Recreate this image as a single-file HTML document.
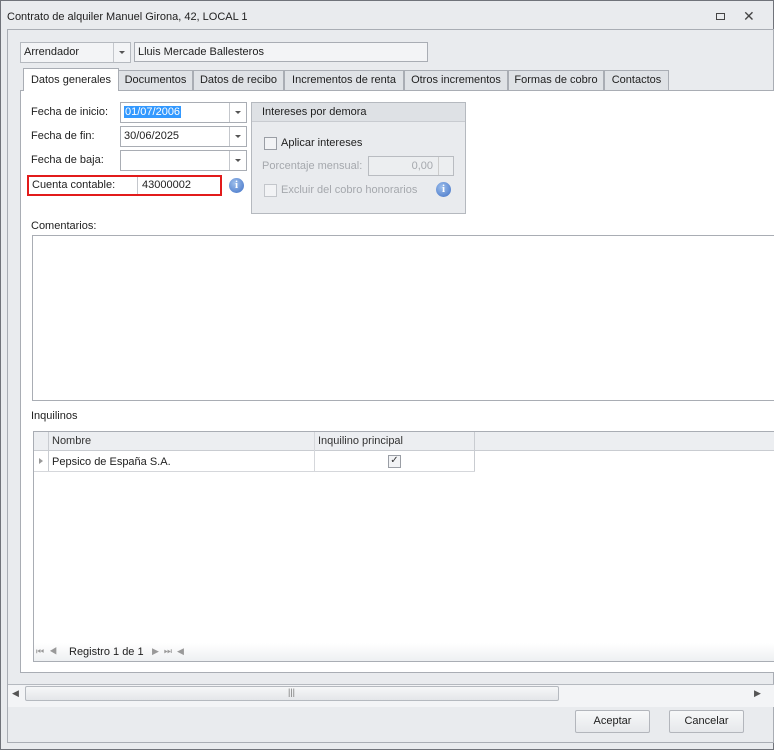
<!DOCTYPE html>
<html><head><meta charset="utf-8"><style>
*{box-sizing:border-box;margin:0;padding:0}
body{width:774px;height:750px;background:#e9ebee;font:11px "Liberation Sans",sans-serif;color:#1e1e1e;position:relative;overflow:hidden}
.a{position:absolute}
.b{border:1px solid #a9adb4;background:#fff}
.t{position:absolute;white-space:nowrap}
.dd{position:absolute;right:0;top:0;bottom:0;width:17px;border-left:1px solid #c4c7cc;background:#fff}
.dd:after{content:"";position:absolute;left:5px;top:8px;border:3px solid transparent;border-top:3px solid #555;border-bottom:0}
.tab{position:absolute;top:70px;height:20px;border:1px solid #a9adb4;border-bottom:none;background:#dfe2e6;text-align:center;line-height:18px;color:#222}
.info{position:absolute;width:15px;height:15px;border-radius:50%;background:radial-gradient(circle at 40% 35%,#9fc0ec,#3f70c6);color:#fff;font:bold 11px "Liberation Serif",serif;text-align:center;line-height:15px}
.cb{position:absolute;width:13px;height:13px;border:1px solid #9a9ea5;background:#f2f3f5}
</style></head><body>
<div class="a" style="left:0;top:0;width:774px;height:750px;border:1px solid #70737a"></div>
<div class="t" style="left:7px;top:11px">Contrato de alquiler Manuel Girona, 42, LOCAL 1</div>
<div class="a" style="left:716px;top:13px;width:9px;height:7px;border:1px solid #444"></div>
<div class="t" style="left:743px;top:8px;font-size:14px;color:#444">✕</div>
<div class="a" style="left:7px;top:29px;width:767px;height:714px;border:1px solid #a9adb4"></div>
<div class="a b" style="left:20px;top:42px;width:111px;height:21px;background:#f3f4f6;border-color:#b5b9bf"><span class="t" style="left:3px;top:3px">Arrendador</span><div class="dd" style="background:#f3f4f6"></div></div>
<div class="a b" style="left:134px;top:42px;width:294px;height:20px;background:#f3f4f6"><span class="t" style="left:3px;top:3px">Lluis Mercade Ballesteros</span></div>
<div class="tab" style="left:23px;top:68px;width:96px;height:23px;background:#fff;line-height:22px;z-index:2">Datos generales</div>
<div class="tab" style="left:118px;width:75px">Documentos</div>
<div class="tab" style="left:193px;width:91px">Datos de recibo</div>
<div class="tab" style="left:284px;width:120px">Incrementos de renta</div>
<div class="tab" style="left:404px;width:104px">Otros incrementos</div>
<div class="tab" style="left:508px;width:96px">Formas de cobro</div>
<div class="tab" style="left:604px;width:65px">Contactos</div>
<div class="a" style="left:20px;top:90px;width:760px;height:583px;border:1px solid #a9adb4;background:#fff"></div>
<div class="t" style="left:31px;top:106px">Fecha de inicio:</div>
<div class="t" style="left:31px;top:130px">Fecha de fin:</div>
<div class="t" style="left:31px;top:154px">Fecha de baja:</div>
<div class="a b" style="left:120px;top:102px;width:127px;height:21px"><span class="t" style="left:3px;top:3px;background:#3399ff;color:#fff;padding:0 1px">01/07/2006</span><div class="dd"></div></div>
<div class="a b" style="left:120px;top:126px;width:127px;height:21px"><span class="t" style="left:3px;top:3px">30/06/2025</span><div class="dd"></div></div>
<div class="a b" style="left:120px;top:150px;width:127px;height:21px"><div class="dd"></div></div>
<div class="a" style="left:27px;top:175px;width:195px;height:21px;border:2px solid #e21b1b;background:#fff"></div>
<div class="a" style="left:137px;top:177px;width:1px;height:17px;background:#c4c7cc"></div>
<div class="t" style="left:32px;top:179px">Cuenta contable:</div>
<div class="t" style="left:142px;top:179px">43000002</div>
<div class="info" style="left:229px;top:178px">i</div>
<div class="a" style="left:251px;top:102px;width:215px;height:112px;border:1px solid #b5b9bf;background:#e9ebee"></div>
<div class="a" style="left:252px;top:103px;width:213px;height:19px;background:#dee1e5;border-bottom:1px solid #c8cbd0"></div>
<div class="t" style="left:262px;top:106px">Intereses por demora</div>
<div class="cb" style="left:264px;top:137px"></div>
<div class="t" style="left:281px;top:137px">Aplicar intereses</div>
<div class="t" style="left:262px;top:160px;color:#a5a8ad">Porcentaje mensual:</div>
<div class="a" style="left:368px;top:156px;width:86px;height:20px;border:1px solid #b9bcc1;background:#eceef0"><span class="t" style="right:20px;top:3px;color:#a5a8ad">0,00</span><div class="a" style="right:0;top:0;bottom:0;width:15px;border-left:1px solid #ccc"></div></div>
<div class="cb" style="left:264px;top:184px;border-color:#c3c6cb"></div>
<div class="t" style="left:281px;top:184px;color:#a5a8ad">Excluir del cobro honorarios</div>
<div class="info" style="left:436px;top:182px">i</div>
<div class="t" style="left:31px;top:220px">Comentarios:</div>
<div class="a b" style="left:32px;top:235px;width:750px;height:166px"></div>
<div class="t" style="left:31px;top:410px">Inquilinos</div>
<div class="a b" style="left:33px;top:431px;width:750px;height:231px"></div>
<div class="a" style="left:34px;top:432px;width:740px;height:19px;background:#eceef1;border-bottom:1px solid #c9ccd1"></div>
<div class="a" style="left:48px;top:432px;width:1px;height:40px;background:#c9ccd1"></div>
<div class="a" style="left:314px;top:432px;width:1px;height:40px;background:#d5d7db"></div>
<div class="a" style="left:474px;top:432px;width:1px;height:40px;background:#c9ccd1"></div>
<div class="a" style="left:34px;top:471px;width:441px;height:1px;background:#d5d7db"></div>
<div class="t" style="left:52px;top:435px;color:#333">Nombre</div>
<div class="t" style="left:318px;top:435px;color:#333">Inquilino principal</div>
<div class="a" style="left:39px;top:458px;border:3px solid transparent;border-left:4px solid #999;border-right:0"></div>
<div class="t" style="left:52px;top:456px">Pepsico de España S.A.</div>
<div class="cb" style="left:388px;top:455px;font-size:10px;line-height:10px;text-align:center;color:#333">✓</div>
<div class="a" style="left:34px;top:643px;width:740px;height:18px;background:linear-gradient(#fff,#eef0f2)"></div>
<div class="t" style="left:36px;top:646px;font-size:9px;color:#999">⏮&nbsp;&nbsp;◀</div>
<div class="t" style="left:69px;top:646px">Registro 1 de 1</div>
<div class="t" style="left:152px;top:646px;font-size:9px;color:#999">▶&nbsp;&nbsp;⏭&nbsp;&nbsp;◀</div>
<div class="a" style="left:8px;top:684px;width:766px;height:1px;background:#b5b9bf"></div>
<div class="a" style="left:8px;top:685px;width:766px;height:22px;background:#f3f4f6"></div>
<div class="t" style="left:12px;top:688px;font-size:9px;color:#555">◀</div>
<div class="t" style="left:754px;top:688px;font-size:9px;color:#555">▶</div>
<div class="a" style="left:25px;top:686px;width:534px;height:15px;border:1px solid #b5b9bf;border-radius:2px;background:linear-gradient(#f6f7f8,#e4e6e9)"></div>
<div class="t" style="left:288px;top:687px;font-size:9px;color:#777">|||</div>
<div class="a" style="left:575px;top:710px;width:75px;height:23px;border:1px solid #b3b6bc;border-radius:2px;background:linear-gradient(#f7f8f9,#e6e8eb);text-align:center;line-height:21px">Aceptar</div>
<div class="a" style="left:669px;top:710px;width:75px;height:23px;border:1px solid #b3b6bc;border-radius:2px;background:linear-gradient(#f7f8f9,#e6e8eb);text-align:center;line-height:21px">Cancelar</div>
</body></html>
